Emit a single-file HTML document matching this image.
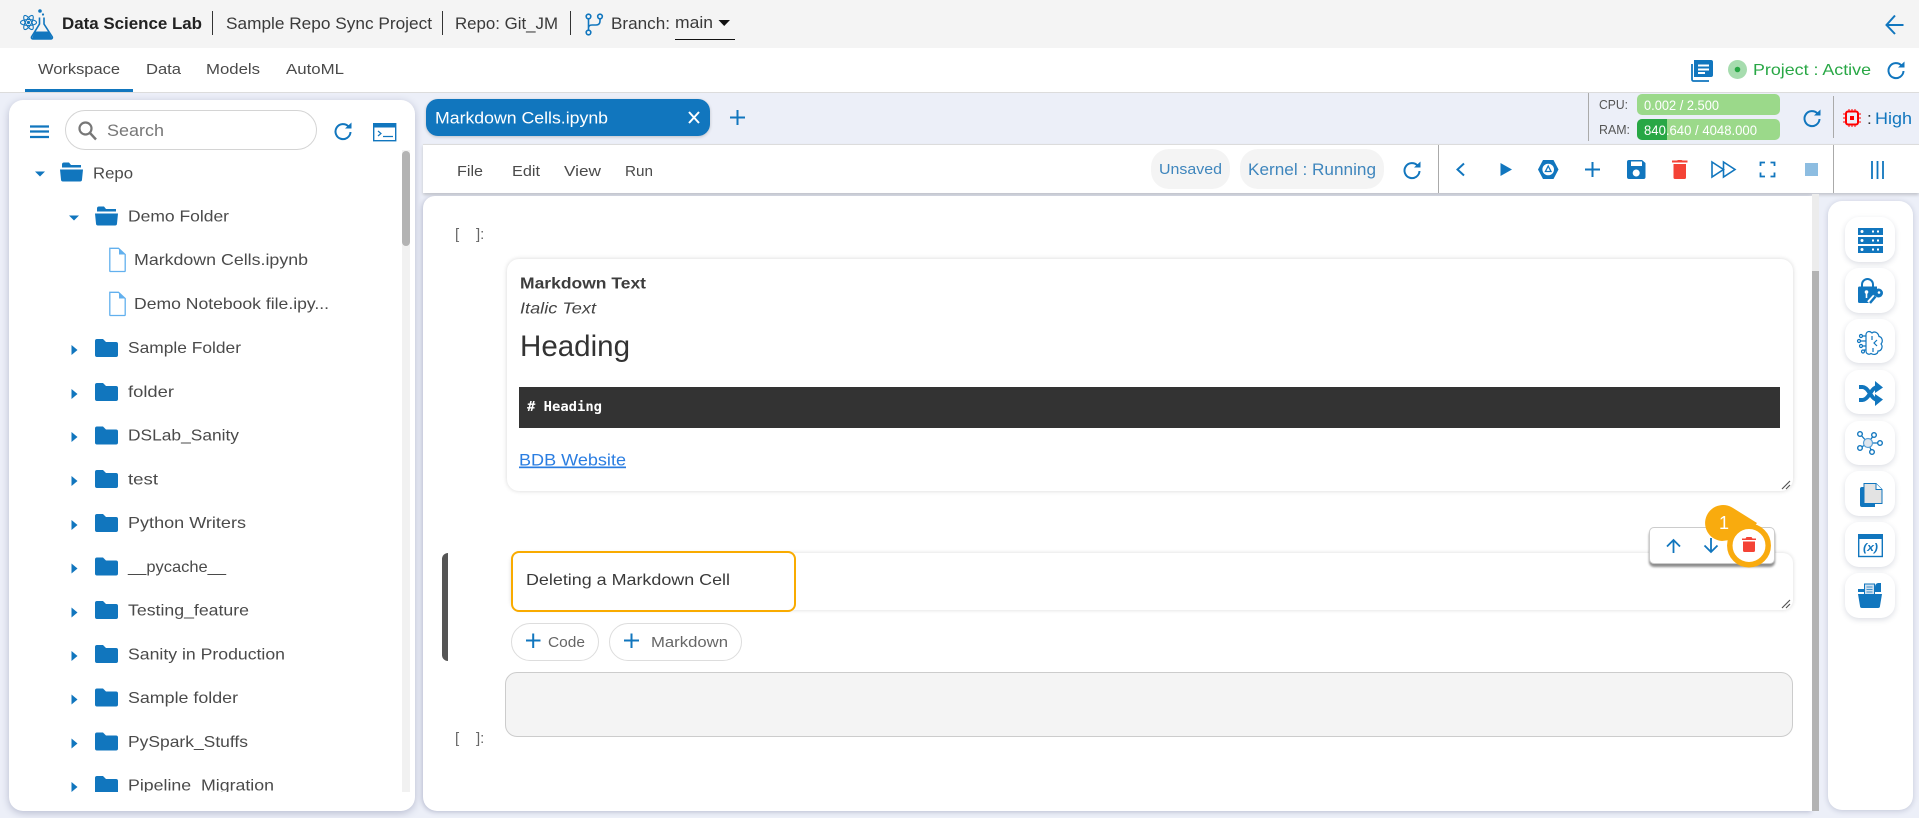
<!DOCTYPE html>
<html lang="en"><head><meta charset="utf-8"><title>Data Science Lab</title>
<style>
html,body{margin:0;padding:0;background:#eceff8;}
body{width:1919px;height:818px;position:relative;overflow:hidden;font-family:"Liberation Sans",sans-serif;}
.b{position:absolute;box-sizing:border-box;}
svg.o{position:absolute;left:0;top:0;}
svg text{font-family:"Liberation Sans",sans-serif;}
.t{font-size:16px;fill:#4a4a4a;}
.h{font-size:17px;fill:#3a3a3a;}
.n{font-size:15px;fill:#4a4a4a;}
.bl{fill:#1176be;}
.s{fill:none;stroke:#1176be;}
.btn{position:absolute;left:1845px;width:50px;height:45px;background:#fff;border-radius:14px;box-shadow:0 2px 6px rgba(40,50,90,.16);}
</style></head><body>
<div class="b" style="left:0;top:0;width:1919px;height:48px;background:#f4f4f4"></div>
<div class="b" style="left:0;top:48px;width:1919px;height:45px;background:#fff;border-bottom:1px solid #dcdcdc"></div>
<div class="b" style="left:25px;top:89px;width:108px;height:3px;background:#1176be"></div>
<div class="b" style="left:9px;top:100px;width:406px;height:711px;background:#fff;border-radius:14px;box-shadow:0 2px 8px rgba(30,40,90,.25)"></div>
<div class="b" style="left:423px;top:144px;width:1496px;height:49px;background:#fff;border-top:1px solid #dcdcdc;box-shadow:0 2px 3px rgba(0,0,0,.18)"></div>
<div class="b" style="left:423px;top:196px;width:1389px;height:615px;background:#fff;border-radius:12px 0 0 14px;box-shadow:-1px 1px 5px rgba(30,40,90,.25)"></div>
<div class="b" style="left:1812px;top:194px;width:7px;height:77px;background:#ececec"></div>
<div class="b" style="left:1812px;top:271px;width:7px;height:540px;background:#b3b3b3"></div>
<div class="b" style="left:1828px;top:201px;width:85px;height:609px;background:#fff;border-radius:14px;box-shadow:0 1px 6px rgba(30,40,90,.2)"></div>
<div class="btn" style="top:217px"></div><div class="btn" style="top:268px"></div><div class="btn" style="top:319px;height:44px"></div><div class="btn" style="top:370px;height:44px"></div><div class="btn" style="top:421px;height:44px"></div><div class="btn" style="top:471px"></div><div class="btn" style="top:522px"></div><div class="btn" style="top:573px"></div>
<div class="b" style="left:426px;top:99px;width:284px;height:37px;background:#1176be;border-radius:12px;box-shadow:0 1px 3px rgba(0,0,0,.2)"></div>
<div class="b" style="left:1637px;top:94px;width:143px;height:21px;background:#9bd98a;border-radius:5px"></div>
<div class="b" style="left:1637px;top:119px;width:143px;height:21px;background:#9bd98a;border-radius:5px;overflow:hidden"><div style="width:30px;height:21px;background:#28a745"></div></div>
<div class="b" style="left:1151px;top:149px;width:79px;height:40px;background:#f4f4f4;border-radius:18px"></div>
<div class="b" style="left:1240px;top:149px;width:144px;height:40px;background:#f4f4f4;border-radius:18px"></div>
<div class="b" style="left:507px;top:259px;width:1286px;height:232px;background:#fff;border-radius:12px;box-shadow:0 0 5px rgba(0,0,0,.16)"></div>
<div class="b" style="left:519px;top:387px;width:1261px;height:41px;background:#333"></div>
<div class="b" style="left:511px;top:553px;width:1282px;height:57px;background:#fff;border-radius:10px;box-shadow:0 0 4px rgba(0,0,0,.15)"></div>
<div class="b" style="left:511px;top:551px;width:285px;height:61px;background:#fff;border:2px solid #f9ab00;border-radius:8px"></div>
<div class="b" style="left:442px;top:553px;width:6px;height:108px;background:#555;border-radius:6px 0 0 6px"></div>
<div class="b" style="left:511px;top:623px;width:88px;height:38px;border:1px solid #ddd;border-radius:19px"></div>
<div class="b" style="left:609px;top:623px;width:133px;height:38px;border:1px solid #ddd;border-radius:19px"></div>
<div class="b" style="left:505px;top:672px;width:1288px;height:65px;background:#f4f4f4;border:1px solid #ccc;border-radius:12px"></div>
<div class="b" style="left:65px;top:110px;width:252px;height:40px;border:1px solid #d4d4d4;border-radius:20px"></div>
<div class="b" style="left:402px;top:150px;width:8px;height:642px;background:#f1f1f1"></div>
<div class="b" style="left:402px;top:151px;width:8px;height:95px;background:#b3b3b3;border-radius:4px"></div>
<div class="b" style="left:1649px;top:527px;width:126px;height:37px;background:#fff;border:1px solid #ccc;border-radius:5px;box-shadow:0 3px 2px rgba(0,0,0,.45)"></div>

<svg class="o" width="1919" height="818" viewBox="0 0 1919 818" xmlns="http://www.w3.org/2000/svg">
<defs>
<g id="fc"><path class="bl" d="M2 0H8L11 3H21a2 2 0 0 1 2 2V16a2 2 0 0 1-2 2H2a2 2 0 0 1-2-2V2a2 2 0 0 1 2-2z"/></g>
<g id="fo"><path class="bl" d="M2 2a2 2 0 0 1 2-2H9L11 2.500H21V5H2zM0 7H23L22 17a2 2 0 0 1-2 2H3a2 2 0 0 1-2-2z"/></g>
<path id="ar" class="bl" d="M0 0L6 5L0 10z"/>
<path id="ad" class="bl" d="M0 0H10L5 5z"/>
<g id="re"><path class="s" stroke-width="2" d="M14.500 4.500A7.500 7.500 0 1 0 16.500 10"/><path class="bl" d="M11 6.500L17.500 6.500V0.500z"/></g>
<g id="doc"><path d="M.8.8H9.500L16.200 7V23.200a.8.8 0 0 1-.8.8H1.600a.8.8 0 0 1-.8-.8z" fill="#fff" stroke="#62b0ee" stroke-width="1.300"/><path d="M10 1L16 7H10z" fill="#62b0ee"/></g>
</defs>

<!-- logo -->
<g fill="none" stroke="#1176be" stroke-width="1.100">
<ellipse cx="28.500" cy="22.500" rx="8" ry="3" transform="rotate(60 28.500 22.500)"/><ellipse cx="28.500" cy="22.500" rx="8" ry="3" transform="rotate(-60 28.500 22.500)"/><ellipse cx="28.500" cy="22.500" rx="8" ry="3"/>
</g><circle cx="28.500" cy="22.500" r="1.600" class="bl"/>
<path d="M39.500 17.500V24L31.500 37a1.500 1.500 0 0 0 1.300 2H51a1.500 1.500 0 0 0 1.300-2L44 24V17.500" fill="none" stroke="#1176be" stroke-width="1.600"/>
<path class="bl" d="M35 31.500H48.500L52 38.500H32z"/><circle cx="40" cy="11" r="1.800" class="bl"/><circle cx="43" cy="14.500" r="1.100" class="bl"/>

<text x="62" y="29" textLength="140" lengthAdjust="spacingAndGlyphs" font-size="17" font-weight="700" fill="#222">Data Science Lab</text>
<path d="M212.500 11V35M442.500 11V35M570.500 11V35" stroke="#333" stroke-width="1"/>
<text class="h" x="226" y="29" textLength="206" lengthAdjust="spacingAndGlyphs">Sample Repo Sync Project</text>
<text class="h" x="455" y="29" textLength="103" lengthAdjust="spacingAndGlyphs">Repo: Git_JM</text>
<g fill="none" stroke="#1176be" stroke-width="1.600"><circle cx="588.500" cy="16.500" r="2.300"/><circle cx="600" cy="16.500" r="2.300"/><circle cx="588.500" cy="32.500" r="2.300"/><path d="M588.500 19V30M600 19V21Q600 25 596 25H592Q588.500 25 588.500 28"/></g>
<text class="h" x="611" y="29" textLength="59" lengthAdjust="spacingAndGlyphs">Branch:</text>
<text class="h" x="675" y="28" textLength="38" lengthAdjust="spacingAndGlyphs">main</text>
<path d="M718.500 20H730L724.200 26z" fill="#111"/><rect x="675" y="39" width="60" height="1" fill="#111"/>
<path class="s" stroke-width="2" d="M1903.500 25H1887M1895 15.500L1886.500 25L1895 34"/>

<text class="n" x="38" y="74" textLength="82" lengthAdjust="spacingAndGlyphs">Workspace</text>
<text class="n" x="146" y="74" textLength="35" lengthAdjust="spacingAndGlyphs">Data</text>
<text class="n" x="206" y="74" textLength="54" lengthAdjust="spacingAndGlyphs">Models</text>
<text class="n" x="286" y="74" textLength="58" lengthAdjust="spacingAndGlyphs">AutoML</text>

<path class="bl" d="M1694 60H1711a2 2 0 0 1 2 2V75a2 2 0 0 1-2 2H1694zM1698 64.500V66.500H1709V64.500zM1698 68.500V70.500H1709V68.500zM1698 72V74H1705V72z" fill-rule="evenodd"/>
<path class="s" stroke-width="1.800" d="M1692 64V79.500a1.500 1.500 0 0 0 1.500 1.500H1709"/>
<circle cx="1737.500" cy="69.500" r="9.500" fill="#a6dcae"/><circle cx="1737.500" cy="69.500" r="2.800" fill="#28a745"/>
<text x="1753" y="75" textLength="118" lengthAdjust="spacingAndGlyphs" font-size="16" fill="#28a745">Project : Active</text>
<use href="#re" x="1887" y="61"/>

<!-- left panel -->
<path class="s" stroke-width="2.200" d="M30 126.500H49M30 131.500H49M30 137H49"/>
<circle cx="85.500" cy="128.500" r="6" fill="none" stroke="#777" stroke-width="2.200"/><path d="M90 133L96 139.500" stroke="#777" stroke-width="2.400"/>
<text x="107" y="136" textLength="57" lengthAdjust="spacingAndGlyphs" font-size="17" fill="#777">Search</text>
<use href="#re" x="334" y="122"/>
<rect x="373.700" y="123.700" width="22" height="17" fill="none" stroke="#1176be" stroke-width="1.400"/><rect x="373" y="123" width="23" height="4.500" class="bl"/>
<path class="s" stroke-width="1.200" d="M378 131L381 133.500L378 136M383 136.500H393"/>

<g transform="translate(0,-1)">
<use href="#ad" x="35" y="172.500"/>
<use href="#fo" x="60" y="163.500"/>
<text class="t" x="93" y="179.500" textLength="40" lengthAdjust="spacingAndGlyphs">Repo</text>
<use href="#ad" x="69" y="216.500"/>
<use href="#fo" x="95" y="207.500"/>
<text class="t" x="128" y="222.500" textLength="101" lengthAdjust="spacingAndGlyphs">Demo Folder</text>
<use href="#doc" x="109" y="248.500"/>
<text class="t" x="134" y="266" textLength="174" lengthAdjust="spacingAndGlyphs">Markdown Cells.ipynb</text>
<use href="#doc" x="109" y="292.500"/>
<text class="t" x="134" y="310" textLength="195" lengthAdjust="spacingAndGlyphs">Demo Notebook file.ipy...</text>

<use href="#ar" x="71.500" y="346"/><use href="#fc" x="95" y="340"/><text class="t" x="128" y="354" textLength="113" lengthAdjust="spacingAndGlyphs">Sample Folder</text>
<use href="#ar" x="71.500" y="390"/><use href="#fc" x="95" y="384"/><text class="t" x="128" y="397.750" textLength="46" lengthAdjust="spacingAndGlyphs">folder</text>
<use href="#ar" x="71.500" y="433"/><use href="#fc" x="95" y="427.500"/><text class="t" x="128" y="441.500" textLength="111" lengthAdjust="spacingAndGlyphs">DSLab_Sanity</text>
<use href="#ar" x="71.500" y="477"/><use href="#fc" x="95" y="471"/><text class="t" x="128" y="485.250" textLength="30" lengthAdjust="spacingAndGlyphs">test</text>
<use href="#ar" x="71.500" y="521"/><use href="#fc" x="95" y="515"/><text class="t" x="128" y="529" textLength="118" lengthAdjust="spacingAndGlyphs">Python Writers</text>
<use href="#ar" x="71.500" y="564.500"/><use href="#fc" x="95" y="558.500"/><text class="t" x="128" y="572.750" textLength="98" lengthAdjust="spacingAndGlyphs">__pycache__</text>
<use href="#ar" x="71.500" y="608.500"/><use href="#fc" x="95" y="602"/><text class="t" x="128" y="616.500" textLength="121" lengthAdjust="spacingAndGlyphs">Testing_feature</text>
<use href="#ar" x="71.500" y="652"/><use href="#fc" x="95" y="646"/><text class="t" x="128" y="660.250" textLength="157" lengthAdjust="spacingAndGlyphs">Sanity in Production</text>
<use href="#ar" x="71.500" y="695.500"/><use href="#fc" x="95" y="689.500"/><text class="t" x="128" y="704" textLength="110" lengthAdjust="spacingAndGlyphs">Sample folder</text>
<use href="#ar" x="71.500" y="739.500"/><use href="#fc" x="95" y="733.500"/><text class="t" x="128" y="747.750" textLength="120" lengthAdjust="spacingAndGlyphs">PySpark_Stuffs</text>
<use href="#ar" x="71.500" y="783"/><use href="#fc" x="95" y="777"/><text class="t" x="128" y="791.500" textLength="146" lengthAdjust="spacingAndGlyphs">Pipeline_Migration</text>
</g>
<rect x="60" y="792" width="340" height="16" fill="#fff"/>

<!-- tab bar -->
<text x="435" y="123.500" textLength="173" lengthAdjust="spacingAndGlyphs" font-size="17" fill="#fff">Markdown Cells.ipynb</text>
<path d="M689 112L699 123M699 112L689 123" stroke="#fff" stroke-width="2"/>
<path class="s" stroke-width="2" d="M730 117.500H745M737.500 110V125"/>
<path d="M1588.500 93V141M1833.500 96V138" stroke="#aaa"/>
<text x="1599" y="109" textLength="29" lengthAdjust="spacingAndGlyphs" font-size="13" fill="#555">CPU:</text>
<text x="1599" y="134" textLength="31" lengthAdjust="spacingAndGlyphs" font-size="13" fill="#555">RAM:</text>
<text x="1644" y="110" textLength="75" lengthAdjust="spacingAndGlyphs" font-size="14" fill="#fff">0.002 / 2.500</text>
<text x="1644" y="135" textLength="113" lengthAdjust="spacingAndGlyphs" font-size="14" fill="#fff">840.640 / 4048.000</text>
<use href="#re" x="1803" y="109"/>
<rect x="1846" y="111.500" width="12" height="13" rx="2" fill="none" stroke="#f00" stroke-width="2"/><rect x="1850" y="116" width="4" height="4" fill="#f00"/>
<path d="M1843 114H1861M1843 118H1861M1843 122H1861M1849 109V127M1852 109V127M1855 109V127" stroke="#f00" stroke-width="1" stroke-dasharray="3 13"/>
<text x="1867" y="124" font-size="17" fill="#333">:</text>
<text x="1875" y="124" textLength="37" lengthAdjust="spacingAndGlyphs" font-size="17" fill="#1176be">High</text>

<!-- toolbar -->
<text class="n" x="457" y="176" textLength="26" lengthAdjust="spacingAndGlyphs">File</text>
<text class="n" x="512" y="176" textLength="28" lengthAdjust="spacingAndGlyphs">Edit</text>
<text class="n" x="564" y="176" textLength="37" lengthAdjust="spacingAndGlyphs">View</text>
<text class="n" x="625" y="176" textLength="28" lengthAdjust="spacingAndGlyphs">Run</text>
<text x="1159" y="174" textLength="63" lengthAdjust="spacingAndGlyphs" font-size="15" fill="#3f86bd">Unsaved</text>
<text x="1248" y="175" textLength="128" lengthAdjust="spacingAndGlyphs" font-size="17" fill="#3f86bd">Kernel : Running</text>
<use href="#re" x="1403" y="161"/>
<path d="M1438.500 145V193M1833.500 145V193" stroke="#aaa"/>
<path class="s" stroke-width="2" d="M1464 163.500L1457.500 169.500L1464 175.500"/>
<path class="bl" d="M1500.500 163L1512 169.500L1500.500 176z"/>
<path class="bl" d="M1543 160H1553.500L1558.500 169.500L1553.500 179H1543L1538 169.500z"/>
<circle cx="1548.200" cy="169.500" r="5.800" fill="#fff"/>
<path class="s" stroke-width="1.300" d="M1548.200 166L1551 171.500H1545.400z"/>
<path class="s" stroke-width="2" d="M1585 169.500H1600M1592.500 162V177"/>
<path class="bl" fill-rule="evenodd" d="M1629 160H1642L1645.500 163V177a2 2 0 0 1-2 2H1629a2 2 0 0 1-2-2V162a2 2 0 0 1 2-2zM1631 161.500V166H1642V161.500zM1636.200 169.500a3.500 3.500 0 1 0 .01 0z"/>
<path d="M1672 162.500H1687.500V160.500H1682.500L1681.500 160H1678L1677 160.500H1672zM1673.500 164H1686V177.500a1.500 1.500 0 0 1-1.500 1.500H1675a1.500 1.500 0 0 1-1.500-1.500z" fill="#f44336"/>
<path class="s" stroke-width="1.600" d="M1712 162L1723.500 169.500L1712 177zM1723.500 162L1735 169.500L1723.500 177z"/>
<path class="s" stroke-width="1.800" d="M1760.500 166V162.500H1765M1770.500 162.500H1774.500V166M1774.500 172.500V176.500H1770.500M1765 176.500H1760.500V172.500"/>
<rect x="1805" y="163" width="13" height="13" fill="#8dbde1"/>
<path class="s" stroke-width="1.800" d="M1872 161V179M1877.500 161V179M1883 161V179"/>

<!-- cells -->
<text x="455" y="239" font-size="15" fill="#666">[</text>
<text x="476" y="239" font-size="15" fill="#666">]:</text>
<text x="520" y="288.500" textLength="126" lengthAdjust="spacingAndGlyphs" font-size="16" font-weight="700" fill="#3d3d3d">Markdown Text</text>
<text x="520" y="313.500" textLength="76" lengthAdjust="spacingAndGlyphs" font-size="16" font-style="italic" fill="#444">Italic Text</text>
<text x="520" y="356" textLength="110" lengthAdjust="spacingAndGlyphs" font-size="30" fill="#333">Heading</text>
<text x="527" y="411" textLength="75" lengthAdjust="spacingAndGlyphs" font-size="13" font-weight="700" fill="#fff" style="font-family:'DejaVu Sans Mono',monospace">&#35; Heading</text>
<text x="519" y="465.500" textLength="107" lengthAdjust="spacingAndGlyphs" font-size="17" fill="#2a7de1" text-decoration="underline">BDB Website</text>
<path d="M1782 489L1790 481M1786 489L1790 485" stroke="#555" stroke-width="1.200"/>
<text x="526" y="585" textLength="204" lengthAdjust="spacingAndGlyphs" font-size="16" fill="#3a3a3a">Deleting a Markdown Cell</text>
<path d="M1782 608L1790 600M1786 608L1790 604" stroke="#555" stroke-width="1.200"/>
<path class="s" stroke-width="2" d="M526 640.500H540.500M533.200 633.500V648"/>
<text x="548" y="647" textLength="37" lengthAdjust="spacingAndGlyphs" font-size="15" fill="#666">Code</text>
<path class="s" stroke-width="2" d="M624 640.500H639M631.500 633.500V648"/>
<text x="651" y="647" textLength="77" lengthAdjust="spacingAndGlyphs" font-size="15" fill="#666">Markdown</text>
<text x="455" y="743" font-size="15" fill="#666">[</text>
<text x="476" y="743" font-size="15" fill="#666">]:</text>

<!-- popup -->
<path class="s" stroke-width="1.800" d="M1673.500 553V540M1667 546.500L1673.500 540L1680 546.500"/>
<path class="s" stroke-width="1.800" d="M1711 538V552M1704.500 545.500L1711 552L1717.500 545.500"/>
<path d="M1757 523L1733 508A18 18 0 1 0 1722 541L1745 538z" fill="#f9ab0e"/>
<circle cx="1749" cy="545.500" r="19.200" fill="#fff" stroke="#f9ab0e" stroke-width="5.500"/>
<path d="M1742 540H1756V538.500H1752.500L1751.500 537H1746.500L1745.500 538.500H1742zM1743 541.500H1755V550.500a1.500 1.500 0 0 1-1.500 1.500H1744.500a1.500 1.500 0 0 1-1.500-1.500z" fill="#f44336"/>
<text x="1719" y="529" font-size="18" fill="#fff">1</text>

<!-- sidebar icons -->
<g><rect x="1858" y="228" width="25" height="7" class="bl"/><rect x="1858" y="237" width="25" height="7" class="bl"/><rect x="1858" y="246" width="25" height="7" class="bl"/>
<g fill="#fff"><circle cx="1862" cy="231.500" r="1.500"/><circle cx="1862" cy="240.500" r="1.500"/><circle cx="1862" cy="249.500" r="1.500"/><rect x="1872" y="230.500" width="2" height="2"/><rect x="1877" y="230.500" width="2" height="2"/><rect x="1872" y="239.500" width="2" height="2"/><rect x="1877" y="239.500" width="2" height="2"/><rect x="1872" y="248.500" width="2" height="2"/><rect x="1877" y="248.500" width="2" height="2"/></g></g>

<path class="bl" d="M1858 288a1.500 1.500 0 0 1 1.500-1.500H1877V292L1870 303H1859.500a1.500 1.500 0 0 1-1.500-1.500z"/>
<path class="s" stroke-width="2" d="M1862 287V284.500a5.500 5.500 0 0 1 11 0V287"/>
<circle cx="1866.500" cy="292" r="1.800" fill="#fff"/><rect x="1865.700" y="292" width="1.600" height="6" fill="#fff"/>
<path d="M1869 303L1875 296.500" stroke="#fff" stroke-width="5"/>
<circle cx="1878.500" cy="293" r="4.500" class="bl"/><circle cx="1879" cy="292.500" r="1.300" fill="#fff"/><path class="s" stroke-width="2.500" d="M1875.500 296.500L1870 303"/>

<g fill="none" stroke="#1176be" stroke-width="1.200">
<path d="M1872 333C1869 330 1866 332 1866 335V351C1866 354 1869 355 1871 353.500C1874 355.500 1878 354 1878 351C1882 351 1883 346 1881 344C1883.500 341 1882 337 1879 336.500C1878 332 1874 331 1872 333z"/>
<path d="M1872 336V340M1877 340L1874 343L1877 346M1873 348V352"/>
<path d="M1866 336H1862.500M1866 341H1860M1866 346H1862M1866 350H1864"/>
<circle cx="1861" cy="336" r="1.500"/><circle cx="1859" cy="341" r="1.500"/><circle cx="1861" cy="346" r="1.500"/><circle cx="1863" cy="351.500" r="1.500"/>
</g>

<path fill="none" stroke="#1176be" stroke-width="4" d="M1859 387H1862.500Q1866 387 1870 393.500Q1874 400 1877.500 400H1878M1859 400H1862.500Q1866 400 1870 393.500Q1874 387 1877.500 387H1878"/>
<path class="bl" d="M1875 381L1883 387.500L1875 393zM1875 394L1883 399.500L1875 406z"/>

<path d="M1868 443L1860 434M1868 443L1874 435M1868 443H1879M1868 443L1860 448M1868 443L1872 452" fill="none" stroke="#1176be" stroke-width="1.300"/>
<circle cx="1868" cy="443" r="4.500" fill="#dfe6ee" stroke="#5aa0d6" stroke-width="1.200"/>
<g fill="#fff" stroke="#1176be" stroke-width="1.400"><circle cx="1860" cy="434" r="2.300"/><circle cx="1874" cy="435" r="2.300"/><circle cx="1880" cy="443" r="2.300"/><circle cx="1860" cy="448" r="2.300"/><circle cx="1872" cy="452" r="2.300"/></g>

<path class="bl" d="M1860 489a2 2 0 0 1 2-2H1875V507H1862a2 2 0 0 1-2-2z"/>
<path d="M1864 483.500H1876L1882 489.500V503.500H1864z" fill="#e3e3e3" stroke="#1176be" stroke-width="1"/>
<path d="M1876 483.500V489.500H1882" fill="#fff" stroke="#1176be" stroke-width="1"/>

<rect x="1858.700" y="534.700" width="23.600" height="21.800" fill="#fff" stroke="#1176be" stroke-width="1.400"/><rect x="1858" y="534" width="25" height="5" class="bl"/>
<text x="1863" y="551" textLength="15" lengthAdjust="spacingAndGlyphs" font-size="11" font-style="italic" font-weight="700" fill="#1176be">(x)</text>

<path class="bl" d="M1875 587a4 4 0 0 1 3-4H1881V592H1875z"/>
<path class="bl" d="M1858 589H1865V592H1858z"/>
<rect x="1864.500" y="584" width="10" height="12" fill="#cfe0ef" stroke="#1176be"/><path d="M1866.500 587H1872.500M1866.500 589.500H1872.500M1866.500 592H1872.500" stroke="#1176be" stroke-width=".8"/>
<path class="bl" d="M1858 594H1882L1880 606a2 2 0 0 1-2 2H1862a2 2 0 0 1-2-2z"/>
</svg>
</body></html>
